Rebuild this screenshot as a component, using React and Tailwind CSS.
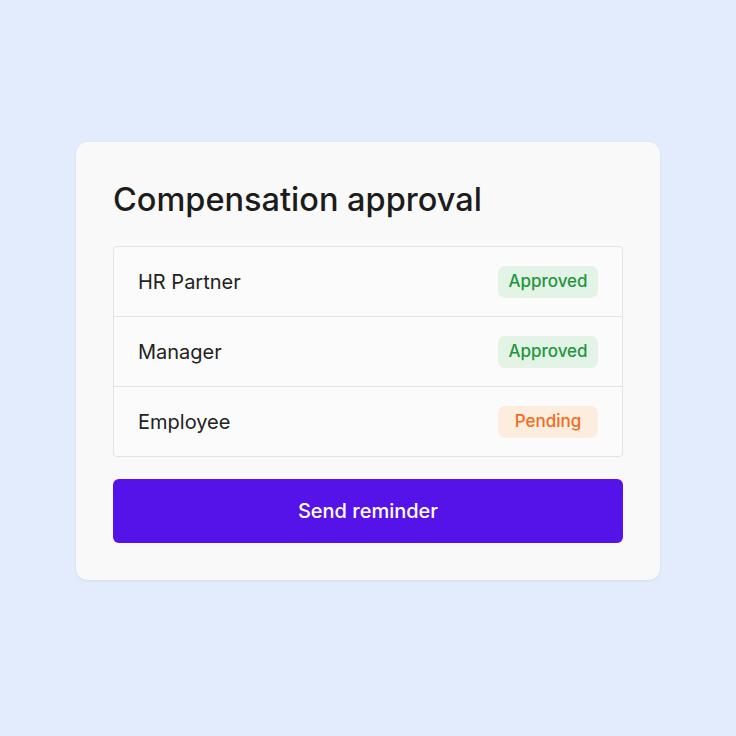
const approvers = [
  { role: 'HR Partner', status: 'Approved' },
  { role: 'Manager', status: 'Approved' },
  { role: 'Employee', status: 'Pending' },
];

const badgeStyles = {
  Approved: 'bg-[#e3f3e6] text-[#23963f]',
  Pending: 'bg-[#fdeddf] text-[#f36b1c]',
};

export default function App() {
  return (
    <div
      className="min-h-screen w-full bg-[#e2ecfc] flex items-center justify-center"
      style={{ fontFamily: 'Inter, "Noto Sans", sans-serif' }}
    >
      <div className="w-[584px] -mt-[14px] rounded-xl bg-[#f9f9f9] p-[37px] shadow-[0_1px_3px_rgba(30,50,100,0.08)]">
        <h1 className="text-[32.5px] leading-[40px] font-medium text-[#1c1c1c] pt-[1px]">
          Compensation approval
        </h1>

        <div className="mt-[26px] rounded-[4px] border border-[#e3e3e3] bg-[#fbfbfb]">
          {approvers.map((a, i) => (
            <div
              key={a.role}
              className={`flex items-center justify-between px-[24px] ${
                i > 0 ? 'h-[70px] border-t border-[#e3e3e3]' : 'h-[69px]'
              }`}
            >
              <span className="text-[20px] text-[#222]">{a.role}</span>
              <span
                className={`flex h-[32px] w-[100px] items-center justify-center rounded-[7px] text-[17px] font-medium ${badgeStyles[a.status]}`}
              >
                {a.status}
              </span>
            </div>
          ))}
        </div>

        <button className="mt-[22px] flex h-[64px] w-full items-center justify-center rounded-[6px] bg-[#5513e9] text-[20px] font-medium text-white">
          Send reminder
        </button>
      </div>
    </div>
  );
}
